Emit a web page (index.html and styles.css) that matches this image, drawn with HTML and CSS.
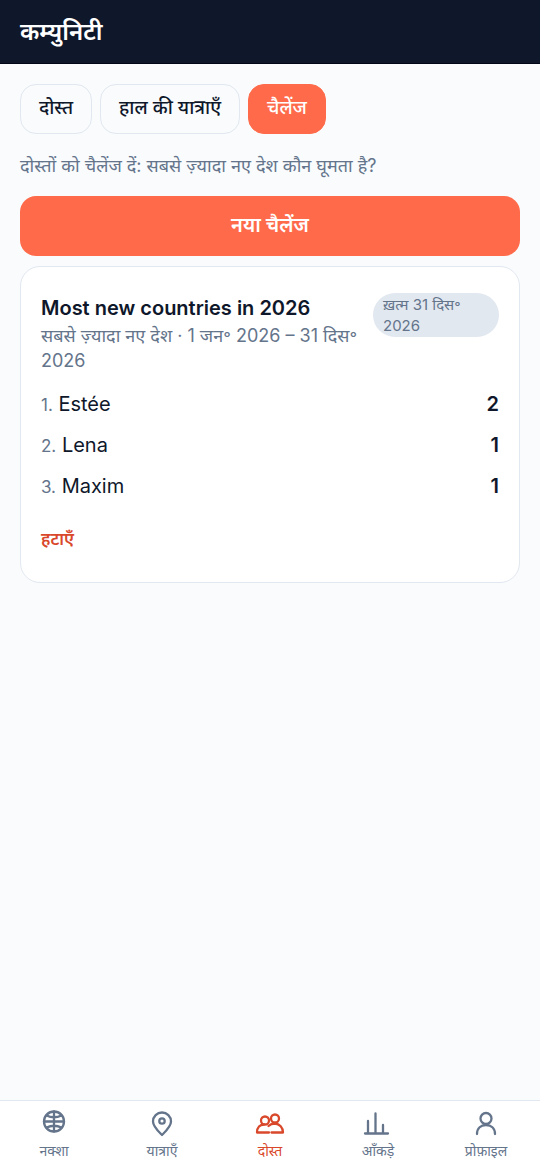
FILE: index.html
```html
<!DOCTYPE html>
<html lang="hi">
<head>
<meta charset="utf-8">
<meta name="viewport" content="width=device-width, initial-scale=1">
<title>कम्युनिटी</title>
<link rel="stylesheet" href="styles.css">
</head>
<body>
<header class="topbar"><h1 class="topbar-title">कम्युनिटी</h1></header>
<main class="content">
  <div class="tabs">
    <button class="tab" type="button">दोस्त</button>
    <button class="tab" type="button">हाल की यात्राएँ</button>
    <button class="tab tab-active" type="button">चैलेंज</button>
  </div>
  <p class="intro">दोस्तों को चैलेंज दें: सबसे ज़्यादा नए देश कौन घूमता है?</p>
  <button class="primary" type="button">नया चैलेंज</button>
  <section class="card">
    <div class="card-head">
      <div class="card-info">
        <h2 class="card-title">Most new countries in 2026</h2>
        <p class="card-sub">सबसे ज़्यादा नए देश · 1 जन॰ 2026 – 31 दिस॰ 2026</p>
      </div>
      <span class="badge">ख़त्म 31 दिस॰ 2026</span>
    </div>
    <ol class="ranks">
      <li class="rank"><span><span class="place">1.</span> Estée</span><b>2</b></li>
      <li class="rank"><span><span class="place">2.</span> Lena</span><b>1</b></li>
      <li class="rank"><span><span class="place">3.</span> Maxim</span><b>1</b></li>
    </ol>
    <button class="remove" type="button">हटाएँ</button>
  </section>
</main>
<nav class="nav">
  <a class="nav-item" href="#map"><svg class="icon" viewBox="0 0 32 32"><circle cx="16" cy="13.500" r="10"/><path d="M16 3.500v20M6 13.500h20M8.500 7.500q7.500 3.500 15 0M8.500 19.500q7.500-3.500 15 0"/></svg><span>नक्शा</span></a>
  <a class="nav-item" href="#trips"><svg class="icon" viewBox="0 0 32 32"><path d="M16 27C12 23 7 18.500 7 13.500a9 9 0 0 1 18 0C25 18.500 20 23 16 27Z"/><circle cx="16" cy="13" r="2.700"/></svg><span>यात्राएँ</span></a>
  <a class="nav-item nav-active" href="#friends"><svg class="icon" viewBox="0 0 32 32"><circle cx="11" cy="12.500" r="4"/><circle cx="21" cy="10.500" r="4"/><path d="M15 24.500H3C3 19.500 6 16.500 10 16.500M17.500 24.500h11.500c0-5-3.500-8.500-8-9-3 0-5 1-6.500 2.500"/></svg><span>दोस्त</span></a>
  <a class="nav-item" href="#stats"><svg class="icon" viewBox="0 0 32 32"><path d="M3 25.500h23M6 25V13M13.500 25V5.500M21 25v-8"/></svg><span>आँकड़े</span></a>
  <a class="nav-item" href="#profile"><svg class="icon" viewBox="0 0 32 32"><circle cx="16" cy="10.500" r="5.500"/><path d="M7 26c0-6 4-9 9-9s9 3 9 9"/></svg><span>प्रोफ़ाइल</span></a>
</nav>
</body>
</html>
```
FILE: styles.css
```css
* { box-sizing: border-box; }
body { margin: 0; min-height: 100vh; display: flex; flex-direction: column; background: #f9fbfd; color: #0f172a; font-family: Inter, "Noto Sans", sans-serif; font-size: 18px; }
h1, h2, p, ol { margin: 0; padding: 0; }
button { font: inherit; cursor: pointer; }
.topbar { height: 64px; padding: 0 20px; display: flex; align-items: center; background: #0f172a; border-bottom: 1px solid #020617; color: #fff; }
.topbar-title { font-size: 24px; font-weight: 600; line-height: 32px; }
.content { flex: 1; padding: 20px; }
.tabs { display: flex; gap: 8px; }
.tab { height: 50px; padding: 0 18px 4px; border: 1px solid #e2e8f0; border-radius: 16px; background: #f9fbfd; color: #0f172a; font-size: 19px; font-weight: 500; }
.tab-active { background: #ff6b4a; border-color: #ff6b4a; color: #fff; }
.intro { margin: 20px 0 18px; line-height: 24px; color: #64748b; }
.primary { width: 100%; height: 60px; padding: 0 0 4px; border: 0; border-radius: 16px; background: #ff6b4a; color: #fff; font-size: 20px; font-weight: 600; }
.card { margin-top: 10px; padding: 26px 20px 31px; border: 1px solid #e2e8f0; border-radius: 20px; background: #fff; }
.card-head { display: flex; align-items: flex-start; justify-content: space-between; gap: 8px; }
.card-title { font-size: 20px; line-height: 30px; font-weight: 600; }
.card-sub { line-height: 25px; color: #64748b; }
.badge { flex: none; width: 126px; padding: 1px 10px; border-radius: 22px; background: #e2e8f0; color: #64748b; font-size: 15px; line-height: 21px; }
.ranks { margin-top: 11px; list-style: none; }
.rank { display: flex; justify-content: space-between; font-size: 20px; line-height: 41px; }
.rank b { font-weight: 600; }
.place { color: #64748b; font-size: 17px; line-height: 20px; }
.remove { display: block; padding: 0; margin-top: 20px; border: 0; background: none; color: #d9482b; font-size: 17px; line-height: 24px; font-weight: 600; }
.nav { height: 70px; display: flex; border-top: 1px solid #e2e8f0; background: #fff; }
.nav-item { flex: 1; padding-top: 7px; display: flex; flex-direction: column; align-items: center; color: #64748b; font-size: 14px; line-height: 22px; text-decoration: none; }
.nav-active { color: #d9482b; }
.icon { width: 32px; height: 32px; fill: none; stroke: currentColor; stroke-width: 2.3; stroke-linecap: round; stroke-linejoin: round; }
```
